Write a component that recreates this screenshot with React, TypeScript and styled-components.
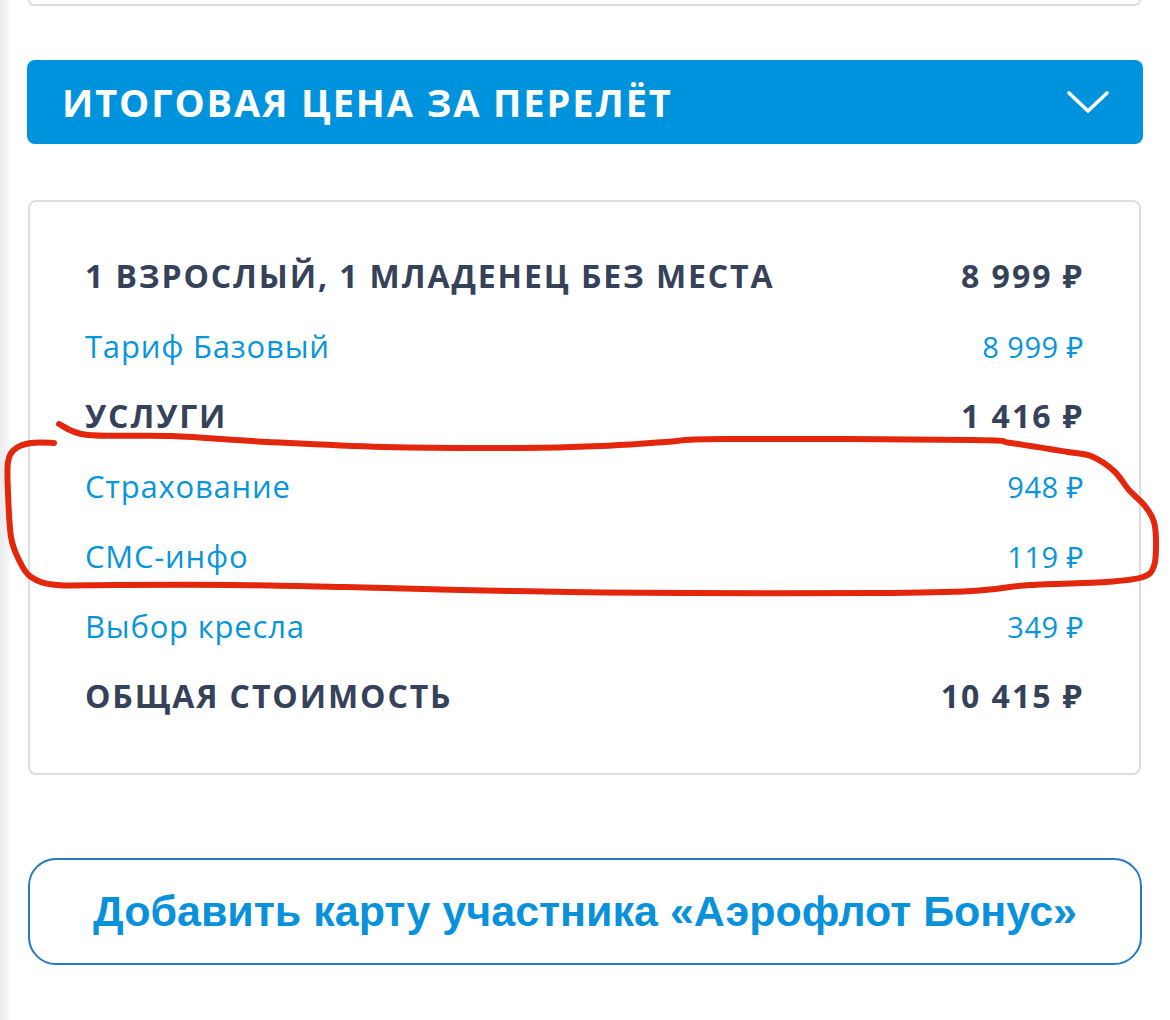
import React from "react";
import styled, { createGlobalStyle } from "styled-components";

const GlobalStyle = createGlobalStyle`
  html, body {
    margin: 0;
    padding: 0;
    background: #ffffff;
  }
  body {
    font-family: "Open Sans", "Noto Sans", "DejaVu Sans", sans-serif;
  }
  * { box-sizing: border-box; }
`;

const Page = styled.div`
  position: relative;
  width: 1170px;
  height: 1020px;
  overflow: hidden;
  background: linear-gradient(to right, #ebebeb 0px, #f3f3f3 7px, #ffffff 11px);
`;

const Column = styled.div`
  width: 1116px;
  margin-left: 27px;
  display: flex;
  flex-direction: column;
`;

const PrevCardEdge = styled.div`
  height: 6px;
  margin: 0 2px 0 1px;
  border: 2px solid #dcdcdc;
  border-top: none;
  border-radius: 0 0 8px 8px;
  background: #fff;
`;

const Header = styled.div`
  margin-top: 54px;
  height: 84px;
  border-radius: 8px;
  background: #0093dd;
  display: flex;
  align-items: center;
  justify-content: space-between;
  padding: 0 33px 0 35px;
`;

const HeaderTitle = styled.h2`
  margin: 0;
  color: #ffffff;
  font-family: "Open Sans", "Noto Sans", sans-serif;
  font-weight: 700;
  font-size: 38px;
  letter-spacing: 1.9px;
  text-transform: uppercase;
  line-height: 1;
`;

const Chevron = styled.svg`
  width: 44px;
  height: 26px;
  display: block;
`;

const Card = styled.div`
  margin-top: 56px;
  margin-left: 1px;
  margin-right: 2px;
  border: 2px solid #dedede;
  border-radius: 8px;
  padding: 39px 55px 42px 55px;
  display: flex;
  flex-direction: column;
  background: #fff;
`;

const Row = styled.div`
  height: 70px;
  display: flex;
  align-items: center;
  justify-content: space-between;
`;

const Label = styled.span<{ $bold?: boolean }>`
  font-family: "Open Sans", "Noto Sans", sans-serif;
  font-size: ${(p) => (p.$bold ? "32px" : "31px")};
  font-weight: ${(p) => (p.$bold ? 700 : 400)};
  letter-spacing: ${(p) => (p.$bold ? "1.9px" : "0.8px")};
  color: ${(p) => (p.$bold ? "#36425a" : "#0795dc")};
  line-height: 1;
`;

const Amount = styled.span<{ $bold?: boolean }>`
  font-family: "Open Sans", "Noto Sans", sans-serif;
  font-size: ${(p) => (p.$bold ? "32px" : "29px")};
  font-weight: ${(p) => (p.$bold ? 700 : 400)};
  color: ${(p) => (p.$bold ? "#36425a" : "#0795dc")};
  letter-spacing: ${(p) => (p.$bold ? "2px" : "0.5px")};
  line-height: 1;
  white-space: nowrap;
`;

const BonusButton = styled.button`
  margin-top: 83px;
  margin-left: 1px;
  margin-right: 1px;
  height: 107px;
  border: 2px solid #2579c6;
  border-radius: 28px;
  background: #ffffff;
  display: flex;
  align-items: center;
  justify-content: center;
  padding: 0;
  font-family: "Liberation Sans", Arial, sans-serif;
  font-weight: 700;
  font-size: 43px;
  color: #0a91dc;
  cursor: pointer;
`;

const Annotation = styled.svg`
  position: absolute;
  left: 0;
  top: 0;
  width: 1170px;
  height: 1020px;
  pointer-events: none;
`;

type Line = { label: string; amount: string; bold?: boolean };

const lines: Line[] = [
  { label: "1 взрослый, 1 младенец без места", amount: "8 999 ₽", bold: true },
  { label: "Тариф Базовый", amount: "8 999 ₽" },
  { label: "Услуги", amount: "1 416 ₽", bold: true },
  { label: "Страхование", amount: "948 ₽" },
  { label: "СМС-инфо", amount: "119 ₽" },
  { label: "Выбор кресла", amount: "349 ₽" },
  { label: "Общая стоимость", amount: "10 415 ₽", bold: true },
];

const strokePoints: [number, number][] = [
  [59, 424], [88, 435], [172, 436], [268, 442], [383, 447], [520, 448],
  [600, 446], [666, 442], [723, 439], [972, 440], [1011, 443], [1068, 452],
  [1091, 456], [1114, 471], [1129, 490], [1145, 506], [1154, 522], [1156, 543],
  [1154, 566], [1143, 577], [1106, 582], [1030, 585], [972, 591], [876, 593],
  [685, 593], [570, 592], [460, 590], [345, 587], [230, 585], [115, 585],
  [57, 585], [31, 577], [19, 560], [11, 537], [8, 493], [8, 462], [15, 449],
  [31, 443], [54, 443],
];

function smoothPath(pts: [number, number][]): string {
  if (pts.length < 2) return "";
  let d = `M ${pts[0][0]} ${pts[0][1]}`;
  for (let i = 0; i < pts.length - 1; i++) {
    const p0 = pts[i - 1] || pts[i];
    const p1 = pts[i];
    const p2 = pts[i + 1];
    const p3 = pts[i + 2] || p2;
    const c1x = p1[0] + (p2[0] - p0[0]) / 6;
    const c1y = p1[1] + (p2[1] - p0[1]) / 6;
    const c2x = p2[0] - (p3[0] - p1[0]) / 6;
    const c2y = p2[1] - (p3[1] - p1[1]) / 6;
    d += ` C ${c1x.toFixed(1)} ${c1y.toFixed(1)}, ${c2x.toFixed(1)} ${c2y.toFixed(1)}, ${p2[0]} ${p2[1]}`;
  }
  return d;
}

export default function App() {
  return (
    <>
      <GlobalStyle />
      <Page>
        <Column>
          <PrevCardEdge />
          <Header>
            <HeaderTitle>Итоговая цена за перелёт</HeaderTitle>
            <Chevron viewBox="0 0 44 26">
              <polyline
                points="3,4 22,22 41,4"
                fill="none"
                stroke="#ffffff"
                strokeWidth="3.6"
                strokeLinecap="round"
                strokeLinejoin="round"
              />
            </Chevron>
          </Header>
          <Card>
            {lines.map((l) => (
              <Row key={l.label}>
                <Label $bold={l.bold}>{l.bold ? l.label.toUpperCase() : l.label}</Label>
                <Amount $bold={l.bold}>{l.amount}</Amount>
              </Row>
            ))}
          </Card>
          <BonusButton>Добавить карту участника «Аэрофлот Бонус»</BonusButton>
        </Column>
        <Annotation viewBox="0 0 1170 1020">
          <path
            d={smoothPath(strokePoints)}
            fill="none"
            stroke="#e3260c"
            strokeWidth="6"
            strokeLinecap="round"
            strokeLinejoin="round"
          />
        </Annotation>
      </Page>
    </>
  );
}
